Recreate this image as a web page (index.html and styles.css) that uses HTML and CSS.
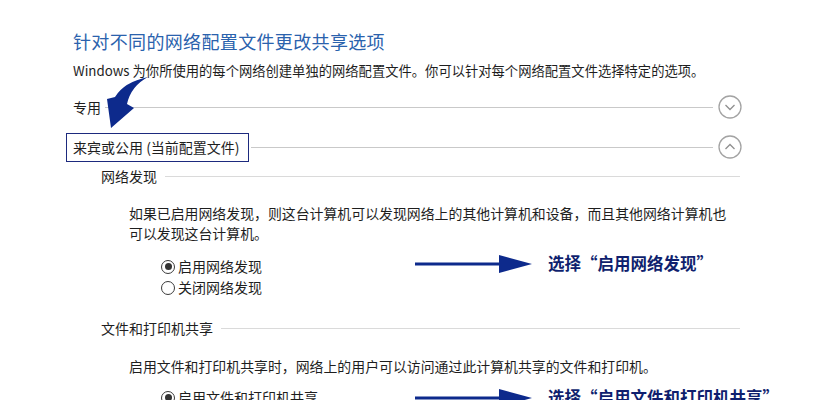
FILE: index.html
```html
<!DOCTYPE html>
<html lang="zh-CN">
<head>
<meta charset="utf-8">
<title>高级共享设置</title>
<link rel="stylesheet" href="styles.css">
</head>
<body>
<div class="page">
  <h1 class="title">针对不同的网络配置文件更改共享选项</h1>
  <p class="desc">Windows 为你所使用的每个网络创建单独的网络配置文件。你可以针对每个网络配置文件选择特定的选项。</p>

  <div class="profile profile-private">
    <span class="profile-name">专用</span>
    <span class="rule"></span>
    <svg class="toggle" width="24" height="24" viewBox="0 0 24 24"><circle cx="12" cy="12" r="11" fill="none" stroke="#a3a3a3" stroke-width="1.3"/><path d="M7.5 10 L12 14.5 L16.5 10" fill="none" stroke="#8f8f8f" stroke-width="1.3"/></svg>
  </div>

  <div class="profile profile-guest">
    <span class="profile-name boxed">来宾或公用 (当前配置文件)</span>
    <span class="rule rule-short"></span>
    <svg class="toggle" width="24" height="24" viewBox="0 0 24 24"><circle cx="12" cy="12" r="11" fill="none" stroke="#a3a3a3" stroke-width="1.3"/><path d="M7.5 14 L12 9.5 L16.5 14" fill="none" stroke="#8f8f8f" stroke-width="1.3"/></svg>
  </div>

  <div class="group">
    <div class="group-head"><span>网络发现</span><span class="rule light"></span></div>
    <p class="text">如果已启用网络发现，则这台计算机可以发现网络上的其他计算机和设备，而且其他网络计算机也<br>可以发现这台计算机。</p>
    <div class="radios">
      <label class="radio"><span class="dot checked"></span>启用网络发现</label>
      <label class="radio"><span class="dot"></span>关闭网络发现</label>
    </div>
  </div>

  <div class="group group-share">
    <div class="group-head"><span>文件和打印机共享</span><span class="rule light"></span></div>
    <p class="text text-share">启用文件和打印机共享时，网络上的用户可以访问通过此计算机共享的文件和打印机。</p>
    <div class="radios radios-share">
      <label class="radio"><span class="dot checked"></span>启用文件和打印机共享</label>
    </div>
  </div>

  <svg class="curve-arrow" width="56" height="60" viewBox="0 0 56 60"><path d="M7 25 L15 23 Q24 8 48 3 Q31 12 27 30 L34 34 L11 54 Z" fill="#0d2a8c"/></svg>

  <div class="note note-1">
    <svg class="note-arrow" width="118" height="20" viewBox="0 0 118 20"><rect x="0" y="8.5" width="86" height="3" fill="#0d2a8c"/><path d="M84 1 L117 10 L84 19 Z" fill="#0d2a8c"/></svg>
    <span class="note-text">选择“启用网络发现”</span>
  </div>
  <div class="note note-2">
    <svg class="note-arrow" width="118" height="20" viewBox="0 0 118 20"><rect x="0" y="8.5" width="86" height="3" fill="#0d2a8c"/><path d="M84 1 L117 10 L84 19 Z" fill="#0d2a8c"/></svg>
    <span class="note-text">选择“启用文件和打印机共享”</span>
  </div>
</div>
</body>
</html>
```

FILE: styles.css
```css
html, body {
  margin: 0;
  padding: 0;
  background: #ffffff;
  overflow: hidden;
}

body {
  font-family: "Noto Sans CJK SC", "Noto Sans", sans-serif;
  color: #1e1e1e;
  width: 835px;
  height: 400px;
}

.page {
  position: relative;
  padding: 29px 0 0 73px;
  width: 667px;
}

.title {
  margin: 0;
  font-size: 18px;
  line-height: 24px;
  font-weight: 400;
  letter-spacing: 0.35px;
  color: #2a62ad;
}

.desc {
  margin: 8px 0 0;
  font-size: 13.3px;
  line-height: 20px;
  white-space: nowrap;
}

.profile {
  display: flex;
  align-items: center;
  width: 669px;
  font-size: 14px;
}

.profile-private {
  margin-top: 12px;
  height: 28px;
}

.profile-guest {
  margin-top: 11px;
  height: 30px;
  margin-left: -7px;
  width: 676px;
}

.profile-name {
  white-space: nowrap;
  line-height: 20px;
}

.boxed {
  border: 1.5px solid #1d2a7e;
  padding: 0 8px 0 6px;
  line-height: 27px;
}

.rule {
  flex: 1;
  height: 1px;
  background: #c9c9c9;
  margin: 0 5px 0 4px;
}

.rule-short {
  margin-left: 2px;
}

.toggle {
  flex: none;
  display: block;
}

.group {
  padding-left: 28px;
  margin-top: 4px;
}

.group-share {
  margin-top: 20px;
}

.group-head {
  display: flex;
  align-items: center;
  height: 20px;
  font-size: 14px;
  white-space: nowrap;
}

.rule.light {
  background: #dadada;
  margin: 0 0 0 8px;
}

.text {
  margin: 17px 0 0 28px;
  font-size: 13.9px;
  line-height: 20px;
  white-space: nowrap;
}

.text-share {
  margin-top: 18px;
}

.radios {
  margin: 13px 0 0 60px;
  display: flex;
  flex-direction: column;
}

.radios-share {
  margin-top: 11px;
}

.radio {
  display: flex;
  align-items: center;
  font-size: 14px;
  line-height: 21px;
  white-space: nowrap;
}

.dot {
  box-sizing: border-box;
  width: 14px;
  height: 14px;
  border: 1.2px solid #3a3a3a;
  border-radius: 50%;
  margin-right: 3px;
  display: flex;
  align-items: center;
  justify-content: center;
}

.dot.checked::after {
  content: "";
  width: 7px;
  height: 7px;
  border-radius: 50%;
  background: #333333;
}

.curve-arrow {
  position: absolute;
  left: 100px;
  top: 74px;
}

.note {
  position: absolute;
  left: 415px;
  display: flex;
  align-items: center;
  height: 24px;
}

.note-1 {
  top: 252px;
}

.note-2 {
  top: 386px;
}

.note-arrow {
  display: block;
  margin-right: 15px;
}

.note-text {
  font-size: 16.5px;
  font-weight: 700;
  color: #0f1f6e;
  white-space: nowrap;
  line-height: 24px;
  position: relative;
  top: -1px;
}
```
